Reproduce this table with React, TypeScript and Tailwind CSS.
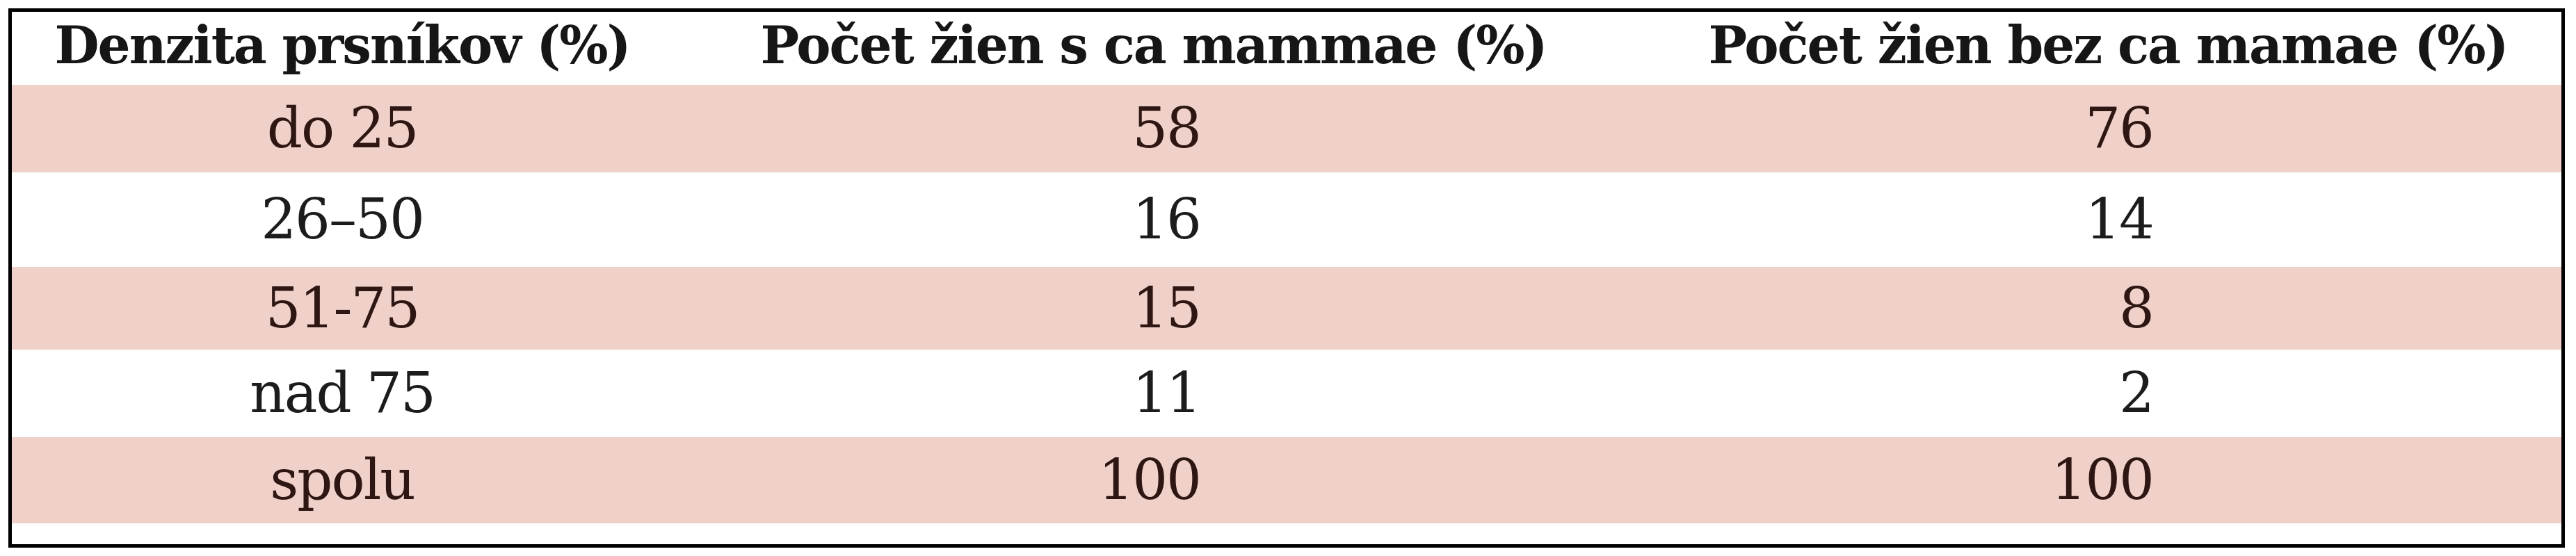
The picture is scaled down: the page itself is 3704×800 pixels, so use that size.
import React from "react";

const rows = [
  { a: "do 25", b: "58", c: "76", pink: true, h: "h-[126px]" },
  { a: "26–50", b: "16", c: "14", pink: false, h: "h-[136px]" },
  { a: "51-75", b: "15", c: "8", pink: true, h: "h-[119px]" },
  { a: "nad 75", b: "11", c: "2", pink: false, h: "h-[126px]" },
  { a: "spolu", b: "100", c: "100", pink: true, h: "h-[124px]" },
];

const serif = "font-['DejaVu_Serif',serif]";

export default function App() {
  return (
    <div className="bg-white w-[3704px] h-[800px] pt-[12px] pl-[12px]">
      <div className={`w-[3676px] border-[5px] border-black bg-white ${serif}`}>
        <div className="grid grid-cols-[950px_1383px_1fr] h-[105px] pb-[10px] items-center font-bold text-[#161616] text-[74px] leading-none tracking-[-2px]">
          <div className="text-center whitespace-nowrap">Denzita prsníkov (%)</div>
          <div className="text-center whitespace-nowrap">Počet žien s ca mammae (%)</div>
          <div className="text-center whitespace-nowrap pl-[29px]">Počet žien bez ca mamae (%)</div>
        </div>
        {rows.map((r, i) => (
          <div
            key={i}
            className={`grid grid-cols-[950px_1383px_1fr] items-center ${r.h} ${
              r.pink ? "bg-[#efd1c9] text-[#2e1612]" : "bg-white text-[#1c1c1c]"
            } text-[80px] leading-none tracking-[-2px]`}
          >
            <div className="text-center whitespace-nowrap">{r.a}</div>
            <div className="text-right pr-[624px]">{r.b}</div>
            <div className="text-right pr-[587px]">{r.c}</div>
          </div>
        ))}
        <div className="h-[30px] bg-white" />
      </div>
    </div>
  );
}
